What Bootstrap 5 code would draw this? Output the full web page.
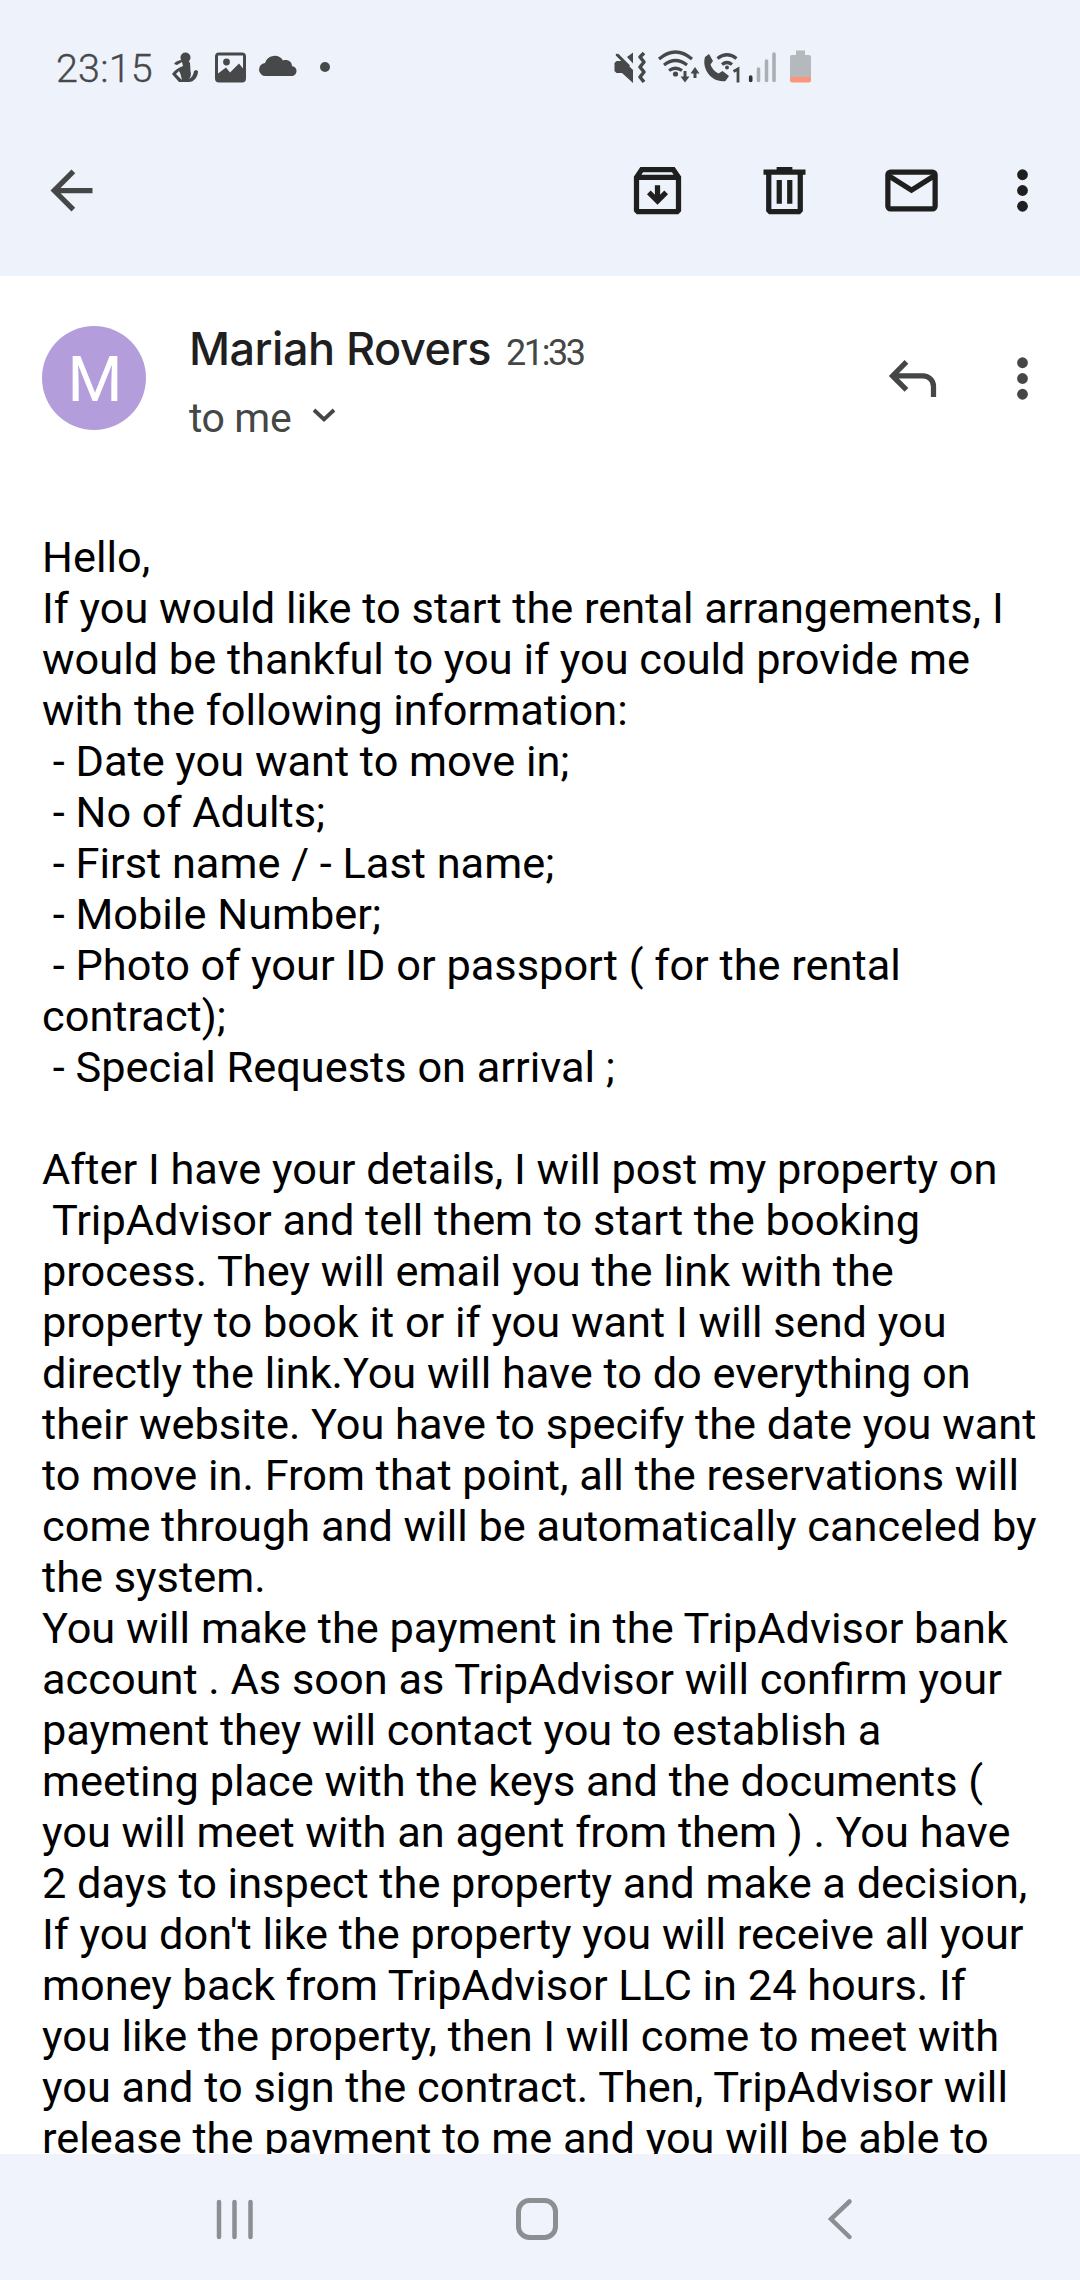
<!DOCTYPE html>
<html lang="en">
<head>
<meta charset="utf-8">
<meta name="viewport" content="width=device-width, initial-scale=1">
<title>Mail</title>
<link href="https://cdn.jsdelivr.net/npm/bootstrap@5.3.0/dist/css/bootstrap.min.css" rel="stylesheet">
<style>
  body { width: 1080px; height: 2280px; font-family: Roboto, "Liberation Sans", sans-serif; background: #fff; color: #000; }
  svg { display: block; flex: none; overflow: visible; }
  .top-area { height: 276px; background: #eef3fb; }
  .status-row { height: 106px; padding: 30px 0 0 56px; color: #474849; }
  .clock { width: 115px; font-size: 39.500px; font-weight: 300; line-height: 77px; -webkit-text-stroke: .35px currentColor; letter-spacing: .2px; }
  .status-row svg { height: 76px; }
  .cloud-icon { margin-left: 14px; }
  .dot-icon { margin-left: 26px; }
  .system-icons { margin-left: 283px; }
  .toolbar { height: 170px; padding: 53px 26px 54px 40px; color: #1f1f1f; }
  .toolbar svg, .actions svg { width: 63px; height: 63px; }
  .tool-icons { gap: 64px; }
  .toolbar .more-icon { margin-left: -16px; }
  .soft { color: #444746; }
  .sender { height: 255px; padding: 50px 26px 0 42px; }
  .avatar { width: 104px; height: 104px; background: #b39ddb; color: #fff; font-size: 63px; line-height: 108px; padding-left: 2px; }
  .who { margin-left: 43px; }
  .sender-name { font-family: Inter, Roboto, sans-serif; font-size: 45px; font-weight: 500; line-height: 46px; color: #1f1f1f; letter-spacing: -.500px; }
  .sent-time { font-size: 36px; line-height: 52px; height: 50px; margin-left: 15px; letter-spacing: -2.400px; padding-top: 1px; }
  .recipient { font-size: 41px; line-height: 50px; margin-top: 17px; letter-spacing: -.400px; }
  .recipient svg { margin-left: 21px; margin-bottom: 6px; }
  .actions { gap: 47px; margin-top: 21px; }
  .message { height: 1623px; padding: 1px 0 0 42px; font-size: 43.340px; line-height: 51px; white-space: pre; }
  .bottom-nav { height: 126px; background: #f0f3fb; color: #8d8e91; padding: 3px 228px 0 216px; }
  .home-icon { margin-left: -8px; }
</style>
</head>
<body class="overflow-hidden d-flex flex-column">
<header class="top-area flex-shrink-0">
  <div class="status-row d-flex">
    <div class="clock">23:15</div>
    <svg width="27" viewBox="171 30 27 76" fill="currentColor"><circle cx="185.500" cy="57.500" r="5"/><path d="M183 60h5l2 3 .5 8c1 4 0 7-2 8 3-1 5-4 5.500-8l2-1 2 1c0 6-4 11-9 11h-10l-7-8c3-4 6-6 11-8l-1-4-5 3-3-1c2-3 5-4 8-4zM179 71l-3 3 6 6c-1-3-1-6-3-9z" fill-rule="evenodd"/></svg>
    <svg width="31" class="ms-3" viewBox="213 30 31 76" fill="currentColor"><path fill-rule="evenodd" d="M218 52.500h23a4 4 0 0 1 4 4v22a4 4 0 0 1-4 4h-23a4 4 0 0 1-4-4v-22a4 4 0 0 1 4-4zm-1 3v18l8-6 4 5 9-9 4 5V55.500z"/><circle cx="225.500" cy="62" r="3.400"/></svg>
    <svg width="34" class="cloud-icon" viewBox="260 30 34 76" fill="currentColor"><path d="M267 76a6.500 6.500 0 0 1-1-13 10 10 0 0 1 18-2.500c5-1.500 9 1.500 9 5.500 3 .5 4.500 2.500 4.500 5s-2 5-4.500 5z"/></svg>
    <svg width="12" class="dot-icon" viewBox="319 30 12 76" fill="currentColor"><circle cx="325" cy="67" r="5"/></svg>
    <svg width="200" class="system-icons" viewBox="614 30 200 76" fill="currentColor">
      <path d="M616.500 53.500l16.500 16.500v13l-11-10h-5.500l-2-2v-8l2-2h5l-6-6zM627 57l6-4.500v11z"/>
      <path d="M617 54.500l12 12" stroke="currentColor" stroke-width="3"/>
      <path d="M644 53l-4 4 4 5-4 5 4 5-4 5 4 5" fill="none" stroke="currentColor" stroke-width="3.600" stroke-linejoin="round"/>
      <g fill="none" stroke="currentColor" stroke-width="3.200">
        <path d="M659 59q16.500-14 33 0M664 65q11.500-9 23 0M669 70.500q6.500-4.500 13 0"/>
        <path d="M685 71v8M695 78v-8" stroke-width="3"/>
        <path d="M717.500 58.500q9.500-7.500 19 0M722 64.500q5-4 10 0"/>
      </g>
      <circle cx="675.500" cy="74" r="2.600"/>
      <path d="M680.500 76.500h9L685 82.500zM690.500 73.500h9L695 67zM705 57l4-3 4 7-2.500 3.500q2 6 8 9l4-2.500 6.500 5-3.500 5c-14 2-24-12-20.500-24z"/>
      <circle cx="727" cy="67.500" r="2"/>
      <path d="M733.500 71.500l4.500-2.500v13.500" fill="none" stroke="currentColor" stroke-width="2.800"/>
      <path d="M750.700 77v3.500" stroke="#303133" stroke-width="3.600" stroke-linecap="round"/>
      <path d="M758.500 69v11.500M766.500 61v19.500M774 54v26.500" stroke="#abaeb3" stroke-width="3.600" stroke-linecap="round"/>
      <path d="M796 50.500h9V55h4a2 2 0 0 1 2 2v20h-21V57a2 2 0 0 1 2-2h4z" fill="#b5b8bd"/><path d="M790 77h21v3.500a2 2 0 0 1-2 2h-17a2 2 0 0 1-2-2z" fill="#fb967b"/>
    </svg>
  </div>
  <div class="toolbar d-flex justify-content-between">
    <svg class="soft" viewBox="0 0 24 24" fill="currentColor"><path d="M20 11H7.830l5.590-5.590L12 4l-8 8 8 8 1.410-1.410L7.830 13H20z"/></svg>
    <div class="tool-icons d-flex">
      <svg viewBox="0 0 24 24" fill="none" stroke="currentColor" stroke-width="2"><path d="M4 7l2-3h12l2 3v12.500l-.5.500h-15L4 19.500zM4 7h16"/><path d="M12 10v5M8.700 12.700L12 16l3.300-3.300"/></svg>
      <svg viewBox="0 0 24 24" fill="none" stroke="currentColor" stroke-width="2"><path d="M4 5h16M9 4h6M6 5v14.500l.5.500h11l.5-.5V5M10 8v9M14 8v9"/></svg>
      <svg viewBox="0 0 24 24" fill="none" stroke="currentColor" stroke-width="2"><rect x="3" y="5" width="18" height="14" rx="1"/><path d="M3 6.200l9 5.700 9-5.700"/></svg>
      <svg class="more-icon" viewBox="0 0 24 24" fill="currentColor"><circle cx="12" cy="6" r="2.050"/><circle cx="12" cy="12" r="2.050"/><circle cx="12" cy="18" r="2.050"/></svg>
    </div>
  </div>
</header>
<section class="sender d-flex flex-shrink-0">
  <div class="avatar rounded-circle text-center">M</div>
  <div class="who">
    <div class="d-flex"><span class="sender-name">Mariah Rovers</span><span class="sent-time soft">21:33</span></div>
    <div class="recipient soft d-flex align-items-center">to me<svg width="24" height="14" viewBox="0 0 24 14" fill="none" stroke="currentColor" stroke-width="3.800"><path d="M2 2l10 9.500L22 2"/></svg></div>
  </div>
  <div class="actions soft d-flex ms-auto">
    <svg viewBox="0 0 24 24" fill="none" stroke="currentColor" stroke-width="2"><path d="M9.700 5.700L4.400 11l5.300 5.300M4.400 11H16a4 4 0 0 1 4 4v4"/></svg>
    <svg viewBox="0 0 24 24" fill="currentColor"><circle cx="12" cy="6" r="2.050"/><circle cx="12" cy="12" r="2.050"/><circle cx="12" cy="18" r="2.050"/></svg>
  </div>
</section>
<main class="message overflow-hidden flex-shrink-0">Hello,
If you would like to start the rental arrangements, I
would be thankful to you if you could provide me
with the following information:
 - Date you want to move in;
 - No of Adults;
 - First name / - Last name;
 - Mobile Number;
 - Photo of your ID or passport ( for the rental
contract);
 - Special Requests on arrival ;

After I have your details, I will post my property on
 TripAdvisor and tell them to start the booking
process. They will email you the link with the
property to book it or if you want I will send you
directly the link.You will have to do everything on
their website. You have to specify the date you want
to move in. From that point, all the reservations will
come through and will be automatically canceled by
the system.
You will make the payment in the TripAdvisor bank
account . As soon as TripAdvisor will confirm your
payment they will contact you to establish a
meeting place with the keys and the documents (
you will meet with an agent from them ) . You have
2 days to inspect the property and make a decision,
If you don't like the property you will receive all your
money back from TripAdvisor LLC in 24 hours. If
you like the property, then I will come to meet with
you and to sign the contract. Then, TripAdvisor will
release the payment to me and you will be able to</main>
<nav class="bottom-nav d-flex align-items-center justify-content-between flex-shrink-0" aria-label="System">
  <svg width="37" height="42" viewBox="0 0 37 42" stroke="currentColor" stroke-width="4.500" stroke-linecap="round"><path d="M3 4v35M18.500 4v35M34.500 4v35"/></svg>
  <svg class="home-icon" width="42" height="42" viewBox="0 0 42 42" fill="none" stroke="currentColor" stroke-width="5"><rect x="2.500" y="2.500" width="37" height="37" rx="11"/></svg>
  <svg width="24" height="42" viewBox="0 0 24 42" fill="none" stroke="currentColor" stroke-width="4.500" stroke-linecap="round"><path d="M21.500 3.500L3 21l18.500 18"/></svg>
</nav>
<script src="https://cdn.jsdelivr.net/npm/bootstrap@5.3.0/dist/js/bootstrap.bundle.min.js"></script>
</body>
</html>
